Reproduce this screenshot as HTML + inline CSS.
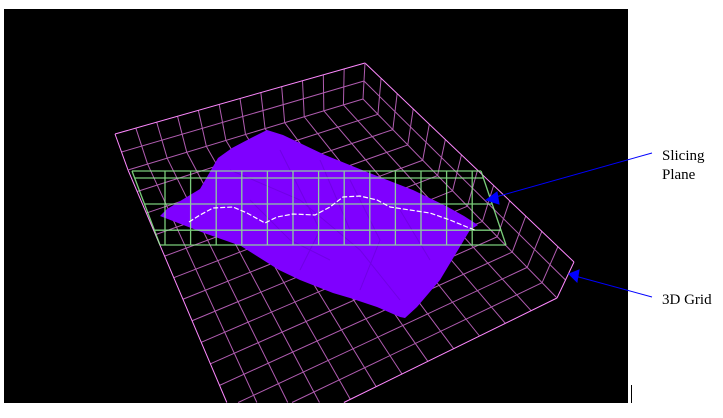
<!DOCTYPE html>
<html><head><meta charset="utf-8"><style>
html,body{margin:0;padding:0;background:#fff;width:723px;height:418px;overflow:hidden}
svg{position:absolute;left:0;top:0}
.t{font-family:"Liberation Serif",serif;font-size:15px;fill:#000}
</style></head><body>
<svg id="s" width="723" height="418" viewBox="0 0 723 418" xmlns="http://www.w3.org/2000/svg">
<rect x="4" y="9" width="624" height="394" fill="#000"/>
<line x1="631.5" y1="385" x2="631.5" y2="403" stroke="#000"/>
<g id="grid"></g>
<polygon fill="#7f00ff" points="267,130 283,135 325,155 367,172 413,190 446,206 464,216 478,225 470,230 440,280 417,307 405,318 400,317 377,307 350,298 333,293 300,280 279,270 241,246 204,233 160,216 167,209 200,189 218,158 232,148 251,138"/>
<g fill="none" stroke="#6a00d8" stroke-width="1" opacity="0.7">
<path d="M230,170 L300,200 L360,250 L400,300 M280,150 L320,230 L300,270 M350,180 L380,240 L360,290 M250,200 L290,240 L330,260 M400,210 L430,260 M320,160 L350,230"/>
</g>
<g id="green" stroke="#90f090" stroke-width="1.3" fill="none" opacity="0.85"></g>
<polyline fill="none" stroke="#fff" stroke-width="1.2" stroke-dasharray="5,2" points="189,222 200,215 213,208 233,207 247,213 265,223 277,217 293,214 315,215 330,207 343,197 360,196 377,200 390,207 410,210 430,213 450,220 467,227 475,230"/>
<g stroke="#0000ff" stroke-width="1" fill="#0000ff">
<line x1="652" y1="153" x2="492" y2="198"/>
<polygon points="486,200 497,192 499,204"/>
<line x1="652" y1="297" x2="575" y2="276"/>
<polygon points="569,274 579,270 577,282"/>
</g>
<text class="t" x="662" y="160">Slicing</text>
<text class="t" x="662" y="179">Plane</text>
<text class="t" x="662" y="304">3D Grid</text>
</svg>
<script>
var NS="http://www.w3.org/2000/svg";
var g=document.getElementById("grid");
var YM=402.5;
function L(p,q,c,w,parent){
 if(p[1]>YM&&q[1]>YM)return;
 if(p[1]>YM){var t=(YM-q[1])/(p[1]-q[1]);p=[q[0]+(p[0]-q[0])*t,YM];}
 if(q[1]>YM){var t=(YM-p[1])/(q[1]-p[1]);q=[p[0]+(q[0]-p[0])*t,YM];}
 var l=document.createElementNS(NS,"line");l.setAttribute("x1",p[0]);l.setAttribute("y1",p[1]);l.setAttribute("x2",q[0]);l.setAttribute("y2",q[1]);l.setAttribute("stroke",c);l.setAttribute("stroke-width",w||1);(parent||g).appendChild(l);}
function lerp(a,b,t){return [a[0]+(b[0]-a[0])*t,a[1]+(b[1]-a[1])*t];}
function bil(A,B,C,D,u,v){return lerp(lerp(A,B,u),lerp(D,C,u),v);}
var BL=[128,170],BR=[363,99],FR=[557,298],FL=[247,450];
var TBL=[115,134],TBR=[365,63],TFR=[574,262];
var dim="#b05cb0",br="#ff88ff";
var NU=12,NV=13;
for(var i=1;i<NU;i++){L(bil(BL,BR,FR,FL,i/NU,0),bil(BL,BR,FR,FL,i/NU,1),dim);}
for(var j=1;j<NV;j++){L(bil(BL,BR,FR,FL,0,j/NV),bil(BL,BR,FR,FL,1,j/NV),dim);}
for(var i=1;i<NU;i++){L(lerp(BL,BR,i/NU),lerp(TBL,TBR,i/NU),dim);}
L(lerp(BL,TBL,.5),lerp(BR,TBR,.5),dim);
for(var j=1;j<NV;j++){L(lerp(BR,FR,j/NV),lerp(TBR,TFR,j/NV),dim);}
L(lerp(BR,TBR,.5),lerp(FR,TFR,.5),dim);
L(BL,FL,br);L(FR,FL,br);L(TBL,TBR,br);L(TBR,TFR,br);L(TFR,FR,br);L(TBL,BL,br);L(BR,TBR,dim);L(BR,FR,dim);L(BL,BR,dim);
var gg=document.getElementById("green");
var GTL=[132,171],GTR=[481,171],GBR=[506,245],GBL=[160,245];
[0,0.095,0.446,0.8,1].forEach(function(v){L(lerp(GTL,GBL,v),lerp(GTR,GBR,v),"#90f090",1.3,gg);});
L(GTL,GBL,"#90f090",1.3,gg);L(GTR,GBR,"#90f090",1.3,gg);
for(var k=0;k<13;k++){var x=165+k*25.6;if(x>478)break;L([x,171],[x,245],"#90f090",1.3,gg);}
</script>
</body></html>
